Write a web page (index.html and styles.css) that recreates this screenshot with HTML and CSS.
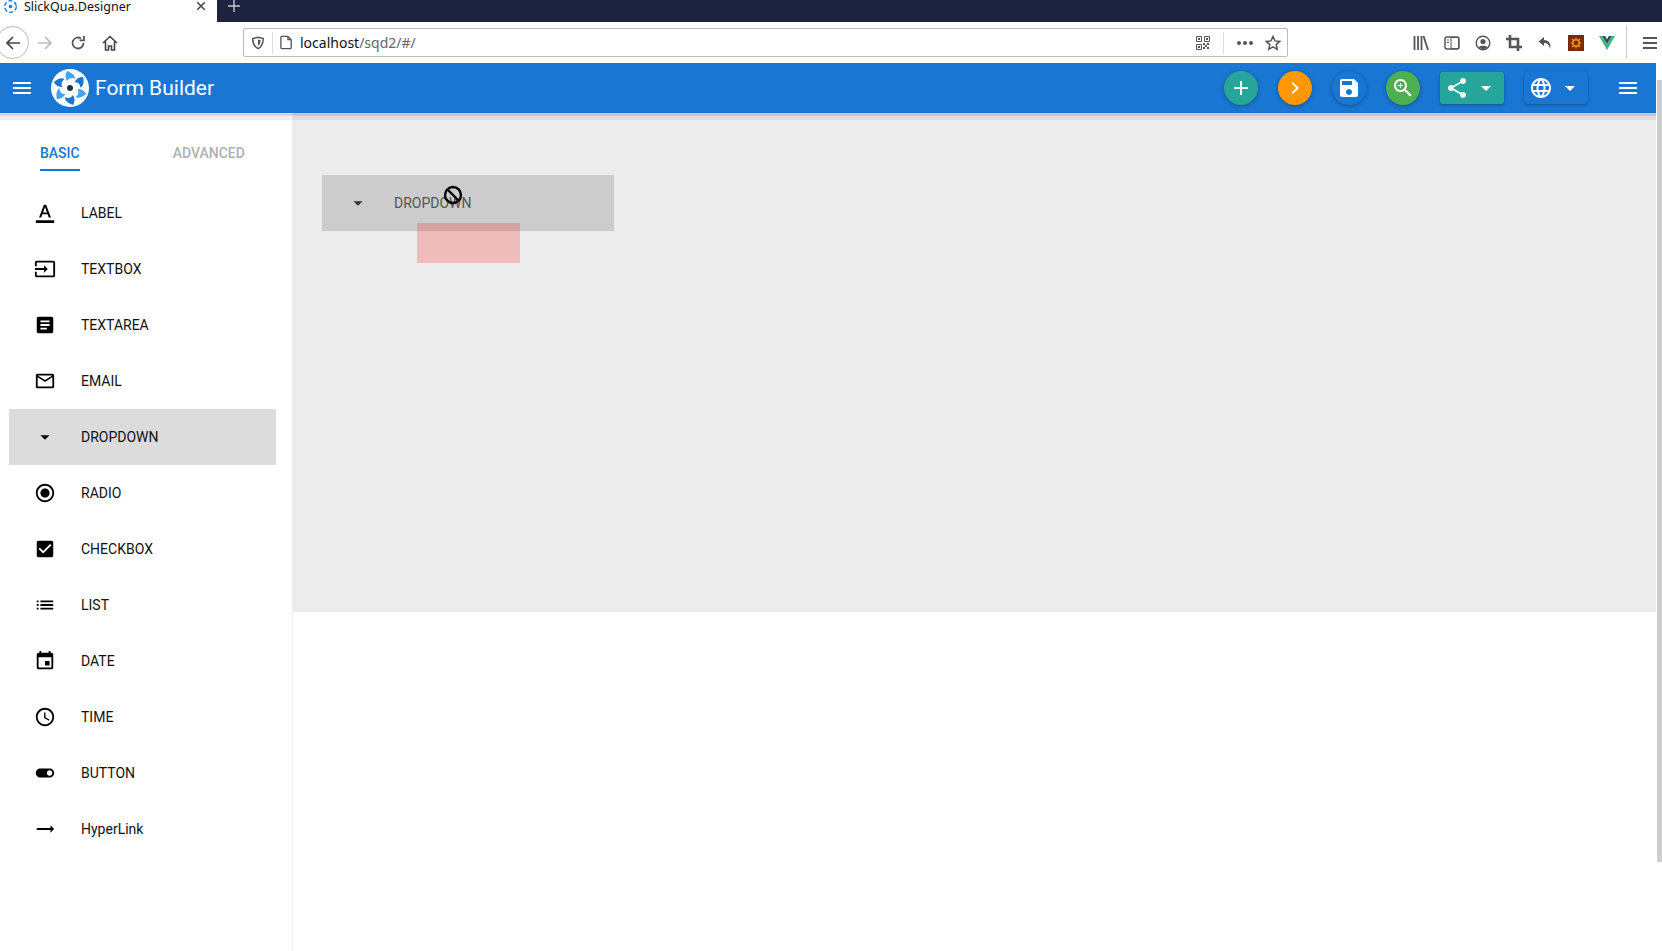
FILE: index.html
```html
<!DOCTYPE html>
<html lang="en">
<head>
    <meta charset="UTF-8">
    <meta name="viewport" content="width=device-width, initial-scale=1.0">
    <title>SlickQua.Designer</title>
    <link rel="stylesheet" href="styles.css">
</head>
<body>

    <svg class="defs" width="0" height="0">
        <defs>
            <g id="swirl">
                <g id="blades">
                    <path id="blade-a" d="M-3 -17 C2 -15 5 -13 5 -9 C2 -11 -1 -10 -3 -7 C-5 -10 -5 -14 -3 -17z"/>
                </g>
            </g>
        </defs>
    </svg>

    <!-- Browser tab strip -->
    <div class="tab-strip">
        <div class="tab">
            <svg class="tab-favicon" viewBox="-19 -19 38 38">
                <circle r="17" fill="none" stroke="#1976d2" stroke-width="4" stroke-dasharray="12 6"/>
                <circle r="5" fill="#1976d2"/>
            </svg>
            <span class="tab-title">SlickQua.Designer</span>
            <svg class="tab-close" viewBox="0 0 12 12"><path d="M1.5 1.5l9 9M10.5 1.5l-9 9"/></svg>
        </div>
        <svg class="tab-new" viewBox="0 0 12 12"><path d="M6 0v12M0 6h12"/></svg>
    </div>

    <!-- Browser toolbar -->
    <div class="toolbar">
        <div class="nav-buttons">
            <div class="back-button">
                <svg class="tb-icon" viewBox="0 0 16 16"><path d="M15 8H2M8 2L2 8l6 6" stroke="#444" stroke-width="1.7"/></svg>
            </div>
            <svg class="tb-icon forward" viewBox="0 0 16 16"><path d="M1 8h13M8 2l6 6-6 6" stroke="#bbb" stroke-width="1.7"/></svg>
            <svg class="tb-icon reload" viewBox="0 0 16 16"><path d="M13.5 8A5.5 5.5 0 1 1 11 3.4M14 1v4.4H9.6" stroke="#555" stroke-width="1.8"/></svg>
            <svg class="tb-icon home" viewBox="0 0 16 16"><path d="M1 8l7-6.5L15 8M3.5 6.5V15h3v-4h3v4h3V6.5" stroke="#444" stroke-width="1.6"/></svg>
        </div>
        <div class="url-bar">
            <svg class="url-shield" viewBox="0 0 16 16"><path d="M8 1.5l6 1.5c0 5-1.5 9-6 11.500C3.500 12 2 8 2 3z" stroke="#555" stroke-width="1.7" fill="none"/><path d="M8 4l3 .8c0 3-1 5-3 6.500z" fill="#555"/></svg>
            <span class="url-sep"></span>
            <svg class="url-page" viewBox="0 0 16 16"><path d="M3 1.500h6.500l3.500 3.500v8.500a1 1 0 0 1-1 1H3a1 1 0 0 1-1-1v-11a1 1 0 0 1 1-1zM9.500 1.500V5H13" stroke="#555" stroke-width="1.400" fill="none"/></svg>
            <span class="url-text">localhost<span class="url-path">/sqd2/#/</span></span>
            <svg class="url-qr" viewBox="0 0 14 14">
                <path d="M.5.5h5v5h-5zM8.500.5h5v5h-5zM.5 8.500h5v5h-5z" fill="none" stroke="#555"/>
                <path d="M2 2h2v2H2zM10 2h2v2h-2zM2 10h2v2H2zM7 7h2v2H7zM9 9h2v2H9zM11 7h2v2h-2zM7 11h2v2H7zM11 11h2v2h-2z" fill="#555"/>
            </svg>
            <span class="url-sep url-sep-right"></span>
            <span class="url-dots"><i></i><i></i><i></i></span>
            <svg class="url-star" viewBox="0 0 16 16"><path d="M8 1.500l2 4.400 4.800.5-3.600 3.200 1 4.700L8 11.900l-4.200 2.400 1-4.700L1.200 6.400 6 5.900z" stroke="#555" stroke-width="1.500" fill="none"/></svg>
        </div>
        <div class="toolbar-right">
            <svg class="ext-icon" viewBox="0 0 16 16"><path d="M1.500 1v14M5 1v14M8.500 1v14M10.500 1l4.500 14" stroke="#555" stroke-width="1.800"/></svg>
            <svg class="ext-icon" viewBox="0 0 16 16"><rect x="1" y="2" width="14" height="12" rx="2" stroke="#555" stroke-width="1.500" fill="none"/><path d="M7 2.500h7.500v11H7z" fill="none" stroke="#555"/><path d="M3 5h2M3 7.500h2" stroke="#555"/></svg>
            <svg class="ext-icon" viewBox="0 0 16 16"><circle cx="8" cy="8" r="6.800" stroke="#555" stroke-width="1.400" fill="none"/><circle cx="8" cy="6.500" r="2.600" fill="#555"/><path d="M3.500 12.500c1-2.500 8-2.500 9 0L8 14.500z" fill="#555"/></svg>
            <svg class="ext-icon" viewBox="0 0 16 16"><path d="M4 0v12h12M0 4h12v12" stroke="#555" stroke-width="2.600" fill="none"/></svg>
            <svg class="ext-icon" viewBox="0 0 16 16"><path d="M7 2L1.500 6.500 7 11V8c3 0 5 1 6 6 1.500-5-1-9-6-9z" fill="#555"/></svg>
            <svg class="ext-icon" viewBox="0 0 16 16"><rect width="16" height="16" fill="#7b2a06"/><circle cx="8" cy="8" r="3.200" fill="none" stroke="#f0901e" stroke-width="1.600"/><path d="M8 2.500v2M8 11.500v2M2.500 8h2M11.500 8h2M4 4l1.500 1.500M10.500 10.500L12 12M12 4l-1.500 1.500M5.500 10.500L4 12" stroke="#f0901e" stroke-width="1.200"/></svg>
            <svg class="ext-icon" viewBox="0 0 16 14"><path d="M0 0h3.200L8 8 12.800 0H16L8 14z" fill="#41b883"/><path d="M3.200 0h2.900L8 3.200 9.900 0h2.900L8 8z" fill="#35495e"/></svg>
            <span class="toolbar-sep"></span>
            <svg class="ext-icon" viewBox="0 0 16 16"><path d="M1 3h14M1 8h14M1 13h14" stroke="#555" stroke-width="2"/></svg>
        </div>
    </div>

    <div class="viewport">
        <div class="app">

            <!-- App header -->
            <header class="app-header">
                <svg class="menu-icon" viewBox="0 0 24 24"><path d="M3 18h18v-2H3v2zm0-5h18v-2H3v2zm0-7v2h18V6H3z"/></svg>
                <svg class="logo" viewBox="-19 -19 38 38">
                    <circle r="19" fill="#fff"/>
                    <g fill="#42a5f5">
                        <use href="#blade-a"/>
                        <use href="#blade-a" transform="rotate(60)" fill="#1976d2"/>
                        <use href="#blade-a" transform="rotate(120)"/>
                        <use href="#blade-a" transform="rotate(180)" fill="#1976d2"/>
                        <use href="#blade-a" transform="rotate(240)"/>
                        <use href="#blade-a" transform="rotate(300)" fill="#1976d2"/>
                    </g>
                    <circle r="3" fill="#263238"/>
                </svg>
                <div class="app-title">Form Builder</div>
                <div class="header-actions">
                    <button class="fab fab-teal"><svg viewBox="0 0 24 24"><path d="M19 13h-6v6h-2v-6H5v-2h6V5h2v6h6v2z"/></svg></button>
                    <button class="fab fab-orange"><svg viewBox="0 0 24 24"><path d="M10 6L8.590 7.410 13.170 12l-4.580 4.590L10 18l6-6z"/></svg></button>
                    <button class="fab fab-blue"><svg viewBox="0 0 24 24"><path d="M17 3H5c-1.110 0-2 .9-2 2v14c0 1.100.89 2 2 2h14c1.100 0 2-.9 2-2V7l-4-4zm-5 16c-1.660 0-3-1.340-3-3s1.340-3 3-3 3 1.340 3 3-1.340 3-3 3zm3-10H5V5h10v4z"/></svg></button>
                    <button class="fab fab-green"><svg viewBox="0 0 24 24"><path d="M15.500 14h-.79l-.28-.27C15.410 12.590 16 11.110 16 9.500 16 5.910 13.090 3 9.500 3S3 5.910 3 9.500 5.910 16 9.500 16c1.610 0 3.090-.59 4.230-1.570l.27.28v.79l5 4.990L20.490 19l-4.990-5zm-6 0C7.010 14 5 11.990 5 9.500S7.010 5 9.500 5 14 7.010 14 9.500 11.990 14 9.500 14zm2.500-4h-2v2H9v-2H7V9h2V7h1v2h2v1z"/></svg></button>
                    <button class="drop-btn drop-teal">
                        <svg class="drop-main" viewBox="0 0 24 24"><path d="M18 16.080c-.76 0-1.440.3-1.960.77L8.910 12.700c.05-.23.09-.46.09-.7s-.04-.47-.09-.7l7.050-4.110c.54.5 1.250.81 2.040.81 1.660 0 3-1.340 3-3s-1.340-3-3-3-3 1.340-3 3c0 .24.04.47.09.7L8.040 9.810C7.500 9.310 6.790 9 6 9c-1.660 0-3 1.340-3 3s1.340 3 3 3c.79 0 1.500-.31 2.040-.81l7.120 4.160c-.05.21-.08.43-.08.65 0 1.610 1.310 2.920 2.920 2.920 1.610 0 2.920-1.310 2.920-2.920s-1.310-2.920-2.920-2.920z"/></svg>
                        <svg class="drop-caret" viewBox="0 0 24 24"><path d="M7 10l5 5 5-5z"/></svg>
                    </button>
                    <button class="drop-btn drop-blue">
                        <svg class="drop-main" viewBox="0 0 24 24"><path d="M11.990 2C6.470 2 2 6.480 2 12s4.470 10 9.990 10C17.520 22 22 17.520 22 12S17.520 2 11.990 2zm6.930 6h-2.950c-.32-1.250-.78-2.450-1.380-3.560 1.840.63 3.370 1.910 4.330 3.560zM12 4.040c.83 1.200 1.480 2.530 1.910 3.960h-3.820c.43-1.430 1.080-2.760 1.910-3.960zM4.260 14C4.100 13.360 4 12.690 4 12s.1-1.360.26-2h3.380c-.08.66-.14 1.320-.14 2 0 .68.06 1.340.14 2H4.260zm.82 2h2.950c.32 1.250.78 2.450 1.380 3.560-1.840-.63-3.370-1.900-4.330-3.560zm2.950-8H5.080c.96-1.660 2.490-2.930 4.330-3.560C8.810 5.550 8.350 6.750 8.030 8zM12 19.960c-.83-1.200-1.480-2.530-1.910-3.960h3.820c-.43 1.430-1.080 2.760-1.910 3.960zM14.340 14H9.660c-.09-.66-.16-1.320-.16-2 0-.68.07-1.350.16-2h4.680c.09.65.16 1.320.16 2 0 .68-.07 1.340-.16 2zm.25 5.560c.6-1.110 1.060-2.310 1.380-3.560h2.950c-.96 1.650-2.490 2.930-4.330 3.560zM16.360 14c.08-.66.14-1.320.14-2 0-.68-.06-1.340-.14-2h3.380c.16.64.26 1.310.26 2s-.1 1.360-.26 2h-3.380z"/></svg>
                        <svg class="drop-caret" viewBox="0 0 24 24"><path d="M7 10l5 5 5-5z"/></svg>
                    </button>
                    <svg class="menu-icon menu-right" viewBox="0 0 24 24"><path d="M3 18h18v-2H3v2zm0-5h18v-2H3v2zm0-7v2h18V6H3z"/></svg>
                </div>
            </header>

            <div class="workspace">

                <!-- Component list -->
                <aside class="sidebar">
                    <div class="side-tabs">
                        <div class="side-tab active">BASIC</div>
                        <div class="side-tab">ADVANCED</div>
                    </div>
                    <div class="comp-list">
                        <div class="comp-row">
                            <svg viewBox="0 0 24 24"><path d="M2 20h20v3H2zM5.490 17h2.420l1.270-3.580h5.650L16.090 17h2.420L13.250 3h-2.500L5.490 17zm4.420-5.610l2.030-5.790h.12l2.030 5.790H9.910z"/></svg>
                            <span>LABEL</span>
                        </div>
                        <div class="comp-row">
                            <svg viewBox="0 0 24 24"><path d="M21 3.010H3c-1.100 0-2 .9-2 2V9h2V4.990h18v14.030H3V15H1v4.010c0 1.100.9 1.980 2 1.980h18c1.100 0 2-.88 2-1.980v-14c0-1.110-.9-2-2-2zM11 16l4-4-4-4v3H1v2h10v3z"/></svg>
                            <span>TEXTBOX</span>
                        </div>
                        <div class="comp-row">
                            <svg viewBox="0 0 24 24"><path d="M19 3H5c-1.100 0-2 .9-2 2v14c0 1.100.9 2 2 2h14c1.100 0 2-.9 2-2V5c0-1.100-.9-2-2-2zm-5 14H7v-2h7v2zm3-4H7v-2h10v2zm0-4H7V7h10v2z"/></svg>
                            <span>TEXTAREA</span>
                        </div>
                        <div class="comp-row">
                            <svg viewBox="0 0 24 24"><path d="M20 4H4c-1.100 0-1.990.9-1.990 2L2 18c0 1.100.9 2 2 2h16c1.100 0 2-.9 2-2V6c0-1.100-.9-2-2-2zm0 14H4V8l8 5 8-5v10zm-8-7L4 6h16l-8 5z"/></svg>
                            <span>EMAIL</span>
                        </div>
                        <div class="comp-row dragging">
                            <svg viewBox="0 0 24 24"><path d="M7 10l5 5 5-5z"/></svg>
                            <span>DROPDOWN</span>
                        </div>
                        <div class="comp-row">
                            <svg viewBox="0 0 24 24"><path d="M12 7c-2.760 0-5 2.240-5 5s2.240 5 5 5 5-2.240 5-5-2.240-5-5-5zm0-5C6.480 2 2 6.480 2 12s4.480 10 10 10 10-4.480 10-10S17.520 2 12 2zm0 18c-4.420 0-8-3.580-8-8s3.580-8 8-8 8 3.580 8 8-3.580 8-8 8z"/></svg>
                            <span>RADIO</span>
                        </div>
                        <div class="comp-row">
                            <svg viewBox="0 0 24 24"><path d="M19 3H5c-1.110 0-2 .9-2 2v14c0 1.100.89 2 2 2h14c1.110 0 2-.9 2-2V5c0-1.100-.89-2-2-2zm-9 14l-5-5 1.410-1.410L10 14.170l7.590-7.590L19 8l-9 9z"/></svg>
                            <span>CHECKBOX</span>
                        </div>
                        <div class="comp-row">
                            <svg viewBox="0 0 24 24"><path d="M3 13h2v-2H3v2zm0 4h2v-2H3v2zm0-8h2V7H3v2zm4 4h14v-2H7v2zm0 4h14v-2H7v2zM7 7v2h14V7H7z"/></svg>
                            <span>LIST</span>
                        </div>
                        <div class="comp-row">
                            <svg viewBox="0 0 24 24"><path d="M17 12h-5v5h5v-5zM16 1v2H8V1H6v2H5c-1.110 0-1.990.9-1.990 2L3 19c0 1.100.89 2 2 2h14c1.100 0 2-.9 2-2V5c0-1.100-.9-2-2-2h-1V1h-2zm3 18H5V8h14v11z"/></svg>
                            <span>DATE</span>
                        </div>
                        <div class="comp-row">
                            <svg viewBox="0 0 24 24"><path d="M11.990 2C6.470 2 2 6.480 2 12s4.470 10 9.990 10C17.520 22 22 17.520 22 12S17.520 2 11.990 2zM12 20c-4.420 0-8-3.580-8-8s3.580-8 8-8 8 3.580 8 8-3.580 8-8 8zm.5-13H11v6l5.250 3.150.75-1.230-4.500-2.670z"/></svg>
                            <span>TIME</span>
                        </div>
                        <div class="comp-row">
                            <svg viewBox="0 0 24 24"><path d="M17 7H7c-2.760 0-5 2.240-5 5s2.240 5 5 5h10c2.760 0 5-2.240 5-5s-2.240-5-5-5zm0 8c-1.660 0-3-1.340-3-3s1.340-3 3-3 3 1.340 3 3-1.340 3-3 3z"/></svg>
                            <span>BUTTON</span>
                        </div>
                        <div class="comp-row hyperlink">
                            <svg viewBox="0 0 24 24"><path d="M22 12l-4-4v3H3v2h15v3z"/></svg>
                            <span>HyperLink</span>
                        </div>
                    </div>
                </aside>

                <!-- Drop canvas -->
                <main class="canvas-col">
                    <div class="canvas">
                        <div class="comp-row canvas-ghost">
                            <svg viewBox="0 0 24 24"><path d="M7 10l5 5 5-5z"/></svg>
                            <span>DROPDOWN</span>
                            <div class="drop-marker"></div>
                            <svg class="no-drop" viewBox="0 0 20 20">
                                <circle cx="10" cy="10" r="8" fill="none" stroke="#000" stroke-width="2.400"/>
                                <path d="M4.500 4.500l11 11" stroke="#000" stroke-width="2.400"/>
                            </svg>
                        </div>
                    </div>
                </main>
            </div>
        </div>

        <div class="scroll-gutter"><div class="scroll-thumb"></div></div>
    </div>

</body>
</html>
```

FILE: styles.css
```css
/* General Styles */
html, body {
    margin: 0;
    padding: 0;
    height: 951px;
    overflow: hidden;
    background-color: #fff;
}

body {
    font-family: Roboto, Arial, sans-serif;
    display: flex;
    flex-direction: column;
}

.defs {
    position: absolute;
}

/* Browser tab strip */
.tab-strip {
    height: 22px;
    background-color: #1f2342;
    display: flex;
    align-items: center;
    flex-shrink: 0;
}

.tab {
    width: 217px;
    height: 22px;
    background-color: #fff;
    display: flex;
    align-items: center;
    box-sizing: border-box;
    padding: 0 11px 0 4px;
    overflow: hidden;
}

.tab-favicon {
    width: 13px;
    height: 13px;
    margin-top: -10px;
    flex-shrink: 0;
}

.tab-title {
    font-family: "Noto Sans", sans-serif;
    font-size: 12.500px;
    color: #111;
    margin-left: 7px;
    margin-top: -10px;
    flex: 1;
}

.tab-close {
    width: 10px;
    height: 10px;
    margin-top: -10px;
}

.tab-close path {
    stroke: #444;
    stroke-width: 1.800;
}

.tab-new {
    width: 12px;
    height: 12px;
    margin: -10px 0 0 11px;
}

.tab-new path {
    stroke: #c8c8d0;
    stroke-width: 1.400;
}

/* Browser toolbar */
.toolbar {
    height: 41px;
    display: flex;
    align-items: center;
    flex-shrink: 0;
    background-color: #fff;
}

.nav-buttons {
    width: 243px;
    display: flex;
    align-items: center;
    flex-shrink: 0;
}

.tb-icon {
    width: 16px;
    height: 16px;
    fill: none;
}

.back-button {
    width: 33px;
    height: 33px;
    margin-left: -4px;
    border: 1px solid #bbb;
    border-radius: 50%;
    box-sizing: border-box;
    display: flex;
    align-items: center;
    justify-content: center;
    flex-shrink: 0;
}

.forward {
    margin-left: 8px;
}

.reload {
    margin-left: 17px;
}

.home {
    margin-left: 16px;
}

.url-bar {
    width: 1045px;
    height: 29px;
    box-sizing: border-box;
    border: 1px solid #bbb;
    border-radius: 2px;
    display: flex;
    align-items: center;
    flex-shrink: 0;
}

.url-shield {
    width: 14px;
    height: 14px;
    margin-left: 7px;
}

.url-sep {
    width: 1px;
    height: 22px;
    background-color: #ddd;
    margin-left: 7px;
}

.url-page {
    width: 15px;
    height: 15px;
    margin-left: 6px;
}

.url-text {
    font-family: "Noto Sans", sans-serif;
    font-size: 14px;
    color: #111;
    margin-left: 6px;
    flex: 1;
}

.url-path {
    color: #666;
}

.url-qr {
    width: 14px;
    height: 14px;
}

.url-sep-right {
    margin-left: 13px;
}

.url-dots {
    display: flex;
    gap: 2px;
    margin-left: 13px;
}

.url-dots i {
    width: 4px;
    height: 4px;
    border-radius: 50%;
    background-color: #555;
}

.url-star {
    width: 16px;
    height: 16px;
    margin: 0 6px 0 12px;
}

.toolbar-right {
    display: flex;
    align-items: center;
    gap: 15px;
    margin-left: 125px;
}

.ext-icon {
    width: 16px;
    height: 16px;
    flex-shrink: 0;
}

.toolbar-sep {
    width: 1px;
    height: 33px;
    background-color: #ccc;
    margin: 0 0 0 -4px;
}

/* App */
.viewport {
    flex: 1;
    display: flex;
    min-height: 0;
}

.app {
    flex: 1;
    display: flex;
    flex-direction: column;
    min-width: 0;
}

.app-header {
    height: 50px;
    background-color: #1976d2;
    display: flex;
    align-items: center;
    flex-shrink: 0;
    position: relative;
    z-index: 2;
    box-shadow: 0 3px 0 rgba(0, 0, 0, 0.1), 0 7px 0 rgba(0, 0, 0, 0.06);
}

.menu-icon {
    width: 24px;
    height: 24px;
    fill: #fff;
    margin-left: 10px;
    flex-shrink: 0;
}

.logo {
    width: 38px;
    height: 38px;
    margin-left: 17px;
    flex-shrink: 0;
}

.app-title {
    font-size: 21px;
    color: #fff;
    margin-left: 6px;
}

.header-actions {
    margin-left: auto;
    display: flex;
    align-items: center;
}

.fab {
    width: 34px;
    height: 34px;
    border: none;
    border-radius: 50%;
    padding: 0;
    margin-right: 20px;
    display: flex;
    align-items: center;
    justify-content: center;
    box-shadow: 0 1px 4px rgba(0, 0, 0, 0.3);
}

.fab svg {
    width: 24px;
    height: 24px;
    fill: #fff;
}

.fab-teal {
    background-color: #26a69a;
}

.fab-orange {
    background-color: #ff9800;
}

.fab-blue {
    background-color: #1976d2;
}

.fab-green {
    background-color: #4caf50;
}

.drop-btn {
    width: 64px;
    height: 32px;
    border: none;
    border-radius: 3px;
    padding: 0 0 0 5px;
    margin-right: 20px;
    display: flex;
    align-items: center;
    box-shadow: 0 1px 3px rgba(0, 0, 0, 0.3);
}

.drop-teal {
    background-color: #26a69a;
}

.drop-blue {
    background-color: #1976d2;
}

.drop-main {
    width: 24px;
    height: 24px;
    fill: #fff;
}

.drop-caret {
    width: 24px;
    height: 24px;
    fill: #fff;
    margin-left: 5px;
}

.menu-right {
    margin: 0 16px 0 8px;
}

.workspace {
    flex: 1;
    display: flex;
    min-height: 0;
}

/* Component list */
.sidebar {
    width: 293px;
    box-sizing: border-box;
    border-right: 1px solid #eee;
    flex-shrink: 0;
    padding: 0 16px 0 9px;
}

.side-tabs {
    display: flex;
    height: 72px;
    padding: 34px 0 0 31px;
    box-sizing: border-box;
}

.side-tab {
    font-size: 14px;
    font-weight: 500;
    color: #b0b0b0;
    height: 22px;
    line-height: 13px;
    padding-top: 0;
    margin-right: 93px;
    box-sizing: content-box;
}

.side-tab.active {
    color: #1976d2;
    border-bottom: 2px solid #1976d2;
}

.comp-row {
    height: 56px;
    display: flex;
    align-items: center;
    gap: 25px;
    padding-left: 25px;
    font-size: 14px;
    color: #111;
}

.comp-row svg {
    width: 22px;
    height: 22px;
    fill: #000;
    flex-shrink: 0;
}

.comp-row.dragging {
    background-color: #dcdcdc;
}

/* Drop canvas */
.canvas-col {
    flex: 1;
    min-width: 0;
}

.canvas {
    height: 499px;
    background-color: #ececec;
    padding: 62px 0 0 29px;
    box-sizing: border-box;
}

.canvas-ghost {
    width: 267px;
    background-color: #ccc;
    color: #555;
    position: relative;
}

.canvas-ghost svg {
    fill: #333;
}

.drop-marker {
    position: absolute;
    left: 95px;
    top: 48px;
    width: 103px;
    height: 40px;
    background-color: rgba(255, 0, 0, 0.2);
}

.canvas-ghost .no-drop {
    position: absolute;
    left: 121px;
    top: 10px;
    width: 20px;
    height: 20px;
}

/* Scrollbar */
.scroll-gutter {
    width: 6px;
    flex-shrink: 0;
    padding: 17px 0 0 1px;
    box-sizing: border-box;
}

.scroll-thumb {
    height: 782px;
    background-color: #cdcdcd;
}
```
